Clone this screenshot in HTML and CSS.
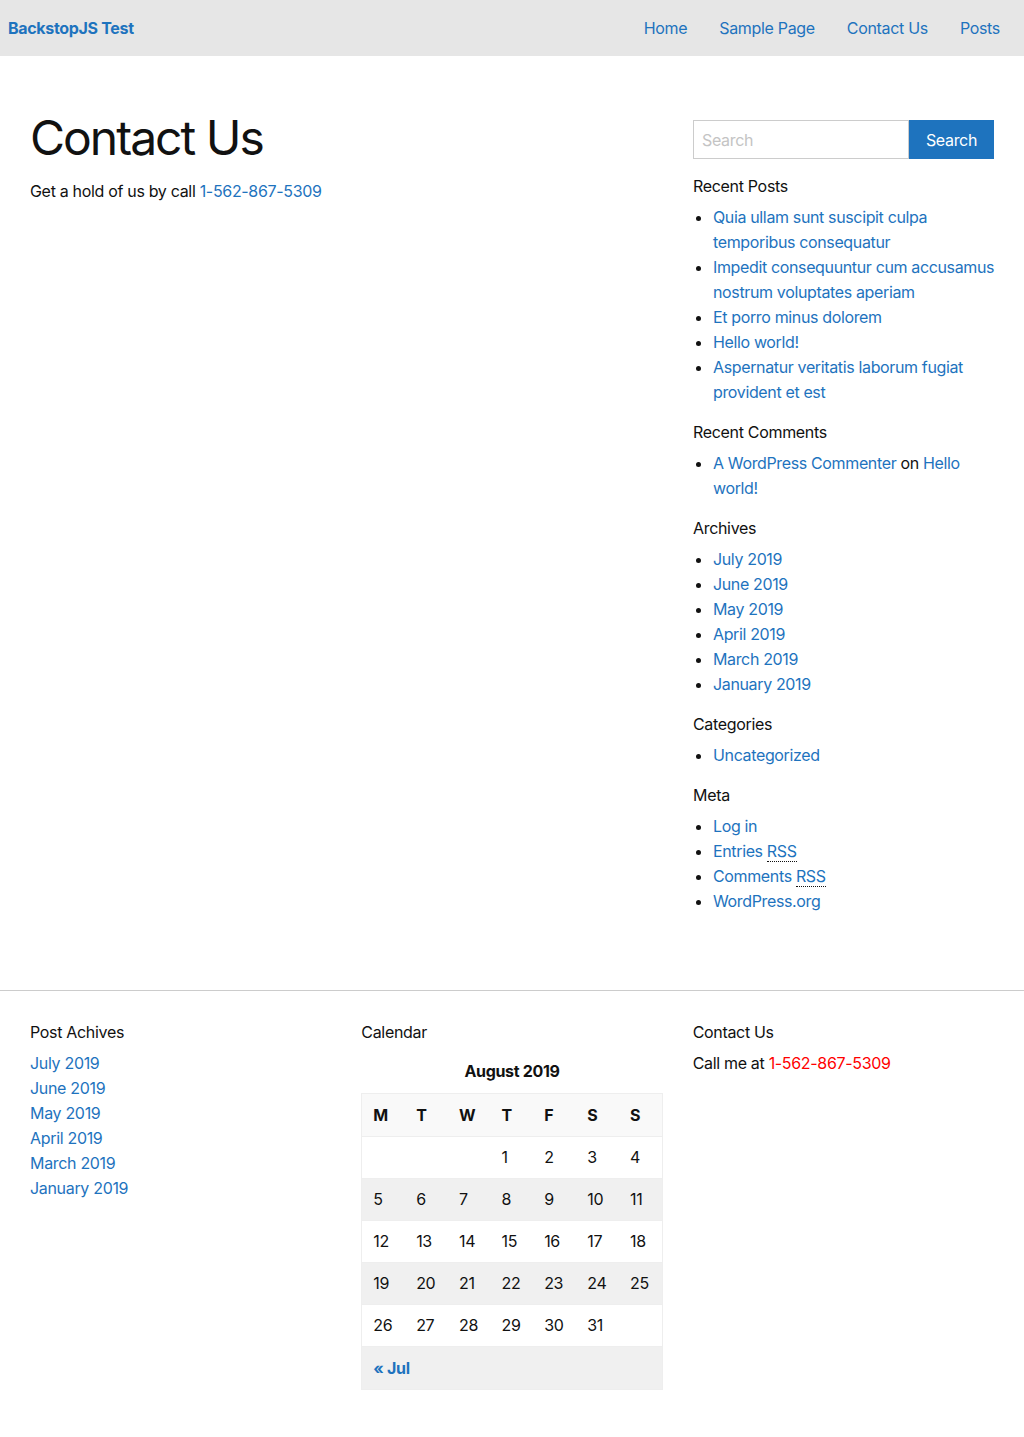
FILE: index.html
```html
<!DOCTYPE html>
<html lang="en">
<head>
<meta charset="utf-8">
<title>Contact Us – BackstopJS Test</title>
<link rel="stylesheet" href="styles.css">
</head>
<body>
<header class="site-header">
  <a class="brand" href="#">BackstopJS Test</a>
  <nav class="nav">
    <a href="#">Home</a>
    <a href="#">Sample Page</a>
    <a href="#">Contact Us</a>
    <a href="#">Posts</a>
  </nav>
</header>

<div class="main">
  <article class="content">
    <h1 class="page-title">Contact Us</h1>
    <p class="lead">Get a hold of us by call <a href="#">1-562-867-5309</a></p>
  </article>

  <aside class="sidebar">
    <form class="search">
      <input class="search-input" type="text" placeholder="Search">
      <button class="search-btn" type="button">Search</button>
    </form>

    <h2 class="widget-title">Recent Posts</h2>
    <ul class="widget-list">
      <li><a href="#">Quia ullam sunt suscipit culpa temporibus consequatur</a></li>
      <li><a href="#">Impedit consequuntur cum accusamus nostrum voluptates aperiam</a></li>
      <li><a href="#">Et porro minus dolorem</a></li>
      <li><a href="#">Hello world!</a></li>
      <li><a href="#">Aspernatur veritatis laborum fugiat provident et est</a></li>
    </ul>

    <h2 class="widget-title">Recent Comments</h2>
    <ul class="widget-list">
      <li><a href="#">A WordPress Commenter</a> on <a href="#">Hello world!</a></li>
    </ul>

    <h2 class="widget-title">Archives</h2>
    <ul class="widget-list">
      <li><a href="#">July 2019</a></li>
      <li><a href="#">June 2019</a></li>
      <li><a href="#">May 2019</a></li>
      <li><a href="#">April 2019</a></li>
      <li><a href="#">March 2019</a></li>
      <li><a href="#">January 2019</a></li>
    </ul>

    <h2 class="widget-title">Categories</h2>
    <ul class="widget-list">
      <li><a href="#">Uncategorized</a></li>
    </ul>

    <h2 class="widget-title">Meta</h2>
    <ul class="widget-list">
      <li><a href="#">Log in</a></li>
      <li><a href="#">Entries <abbr title="Really Simple Syndication">RSS</abbr></a></li>
      <li><a href="#">Comments <abbr title="Really Simple Syndication">RSS</abbr></a></li>
      <li><a href="#">WordPress.org</a></li>
    </ul>
  </aside>
</div>

<footer class="site-footer">
  <div class="footer-cols">
    <section class="footer-col">
      <h2 class="widget-title">Post Achives</h2>
      <ul class="plain-list">
        <li><a href="#">July 2019</a></li>
        <li><a href="#">June 2019</a></li>
        <li><a href="#">May 2019</a></li>
        <li><a href="#">April 2019</a></li>
        <li><a href="#">March 2019</a></li>
        <li><a href="#">January 2019</a></li>
      </ul>
    </section>

    <section class="footer-col">
      <h2 class="widget-title">Calendar</h2>
      <table class="calendar">
        <caption>August 2019</caption>
        <thead>
          <tr><th>M</th><th>T</th><th>W</th><th>T</th><th>F</th><th>S</th><th>S</th></tr>
        </thead>
        <tbody>
          <tr><td></td><td></td><td></td><td>1</td><td>2</td><td>3</td><td>4</td></tr>
          <tr><td>5</td><td>6</td><td>7</td><td>8</td><td>9</td><td>10</td><td>11</td></tr>
          <tr><td>12</td><td>13</td><td>14</td><td>15</td><td>16</td><td>17</td><td>18</td></tr>
          <tr><td>19</td><td>20</td><td>21</td><td>22</td><td>23</td><td>24</td><td>25</td></tr>
          <tr><td>26</td><td>27</td><td>28</td><td>29</td><td>30</td><td>31</td><td></td></tr>
        </tbody>
        <tfoot>
          <tr><td colspan="7"><a class="prev" href="#">« Jul</a></td></tr>
        </tfoot>
      </table>
    </section>

    <section class="footer-col">
      <h2 class="widget-title">Contact Us</h2>
      <p class="call">Call me at <span class="red">1-562-867-5309</span></p>
    </section>
  </div>
</footer>
</body>
</html>
```

FILE: styles.css
```css
html, body {
  margin: 0;
  padding: 0;
  background: #fff;
  color: #111;
  font-family: Inter, "Noto Sans", "Liberation Sans", sans-serif;
  font-size: 16px;
  line-height: 25px;
  letter-spacing: -0.32px;
}

a {
  color: #1e73be;
  text-decoration: none;
}

.site-header {
  height: 56px;
  background: #e6e6e6;
  display: flex;
  align-items: center;
  justify-content: space-between;
  padding: 0 24px 0 8px;
}

.brand {
  font-weight: 700;
  font-size: 16px;
}

.nav {
  display: flex;
  gap: 32px;
}

.main {
  display: grid;
  grid-template-columns: 1fr 301px;
  gap: 30px;
  padding: 64px 30px 61px 30px;
}

.page-title {
  margin: 0;
  font-size: 48px;
  font-weight: 400;
  line-height: 36px;
  letter-spacing: -2px;
  color: #111;
}

.lead {
  margin: 23px 0 0;
}

.search {
  display: flex;
  margin: 0 0 15px;
}

.search-input {
  flex: 1;
  min-width: 0;
  height: 39px;
  box-sizing: border-box;
  border: 1px solid #ccc;
  padding: 0 8px;
  font-family: inherit;
  font-size: 16px;
  letter-spacing: -0.32px;
  color: #111;
  background: #fff;
}

.search-input::placeholder {
  color: #c4c4c4;
}

.search-btn {
  width: 85px;
  height: 39px;
  border: 0;
  background: #1e73be;
  color: #fff;
  font-family: inherit;
  font-size: 16px;
  letter-spacing: -0.32px;
  padding: 0;
}

.widget-title {
  margin: 0 0 6px;
  font-size: 16px;
  font-weight: 400;
  line-height: 25px;
  color: #111;
}

.widget-list {
  margin: 0 -6px 15px 0;
  padding: 0 0 0 20px;
  list-style: disc;
  letter-spacing: -0.36px;
}

abbr {
  text-decoration: none;
  border-bottom: 1px dotted #111;
}

.site-footer {
  border-top: 1px solid #ccc;
  padding: 29px 30px 46px;
}

.footer-cols {
  display: grid;
  grid-template-columns: 1fr 1fr 1fr;
  column-gap: 30px;
}

.plain-list {
  margin: 0;
  padding: 0;
  list-style: none;
}

.calendar {
  width: 100%;
  border-collapse: collapse;
  margin-top: 9px;
  border-left: 1px solid #eee;
  border-right: 1px solid #eee;
}

.calendar caption {
  font-weight: 700;
  line-height: 25px;
  padding: 5px 0 9px;
  text-align: center;
}

.calendar th,
.calendar td {
  text-align: left;
  padding: 0 0 0 11px;
  height: 41px;
  border-top: 1px solid #eee;
  border-bottom: 1px solid #eee;
}

.calendar thead tr {
  background: #f9f9f9;
}

.calendar thead th {
  height: 42px;
  font-weight: 700;
}

.calendar tbody tr:nth-child(even) {
  background: #f0f0f0;
}

.calendar tbody tr:nth-child(odd) {
  background: #fff;
}

.calendar tfoot td {
  background: #f0f0f0;
  height: 42px;
}

.prev {
  font-weight: 700;
}

.call {
  margin: 6px 0 0;
}

.red {
  color: #ff0000;
}
```
